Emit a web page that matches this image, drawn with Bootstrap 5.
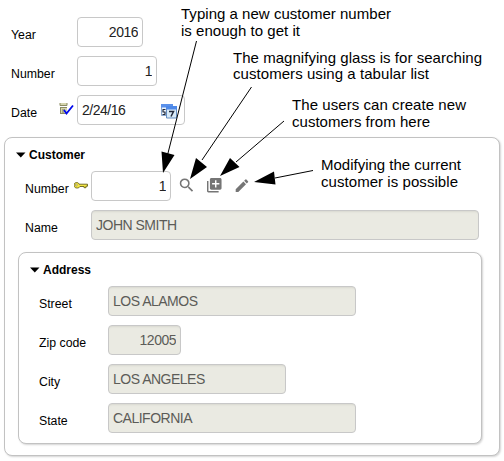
<!DOCTYPE html>
<html lang="en">
<head>
<meta charset="utf-8">
<meta name="viewport" content="width=device-width, initial-scale=1">
<title>Invoice customer</title>
<link href="https://cdn.jsdelivr.net/npm/bootstrap@5.3.0/dist/css/bootstrap.min.css" rel="stylesheet">
<style>
body { font-family: "Liberation Sans", Arial, sans-serif; color: #000; font-size: 12px; line-height: 16px; overflow: hidden; }
.sheet { width: 504px; height: 461px; padding: 17px 3px 0 4px; }
.fields { gap: 9px; }
.line { height: 30px; }
.line > label { padding-top: 6px; font-size: 12.3px; }
.top-fields { padding-left: 7px; }
.top-fields label { width: 48px; }
.top-fields .slot { width: 18px; }
.cust label { width: 49px; }
.cust .slot { width: 17px; }
.addr label { width: 69px; }
.line .form-control { height: 30px; min-height: 0; padding: 0 4px; font-size: 14px; letter-spacing: -.5px; line-height: 26px; color: #222; border-color: #c8c8c8; border-radius: 4px; box-shadow: none; }
.line .form-control:disabled { color: #5c5c58; background: #eaeae2; opacity: 1; box-shadow: inset 0 2px 2px -1px #d8d8d0; }
.w-66 { width: 66px; } .w-73 { width: 73px; } .w-80 { width: 80px; } .w-108 { width: 108px; }
.w-178 { width: 178px; } .w-248 { width: 248px; } .w-388 { width: 388px; }
.frame { border: 1px solid #c2c2c2; border-radius: 8px; box-shadow: 1px 1px 2px #d4d4d4; --bs-card-border-radius: 8px; }
.frame-outer { width: 496px; height: 319px; margin-top: 12px; }
.frame-inner { width: 464px; height: 192px; margin: 12px 0 0 13px; }
.frame h2 { font-size: 12px; line-height: 16px; padding: 9px 0 8px 11px; gap: 3px; }
.cust { padding-left: 20px; }
.addr { padding-left: 20px; }
.date-box { width: 108px; }
.date-box svg { right: 7px; top: 9px; }
.tools { padding-left: 8px; gap: 12px; }
.notes { font: 15px "Liberation Sans", Arial, sans-serif; }
</style>
<script src="https://cdn.jsdelivr.net/npm/bootstrap@5.3.0/dist/js/bootstrap.bundle.min.js"></script>
</head>
<body class="bg-white">
<main class="sheet position-relative">
  <div class="fields top-fields d-flex flex-column">
    <div class="line d-flex align-items-center"><label for="year">Year</label><span class="slot"></span><input id="year" class="form-control w-66 text-end" value="2016"></div>
    <div class="line d-flex align-items-center"><label for="num">Number</label><span class="slot"></span><input id="num" class="form-control w-80 text-end" value="1"></div>
    <div class="line d-flex align-items-center"><label for="date">Date</label>
      <span class="slot d-flex">
        <svg width="15" height="16" viewBox="0 1 15 16"><path d="M1 2h7v3H1zM1 6h7v7H1z" fill="#d5d5ae"/><path d="M1 2v2.500h7V2M1 6.500h7M1 12.500h6M1.500 6v7" fill="none" stroke="#8b8b62"/><path d="M3 9h3M3 11h2" stroke="#77775a"/><path d="M5 9L7.500 12.500l6.500-8" fill="none" stroke="#0009ed" stroke-width="1.8"/></svg>
      </span>
      <div class="date-box position-relative"><input id="date" class="form-control" value="2/24/16">
        <svg class="position-absolute" width="17" height="15" viewBox="0 0 17 15"><path d="M.5.5h11v11H.5z" fill="#edf5fc" stroke="#87a7d0"/><path d="M0 0h12v3.500H0z" fill="#5a91eb"/><path d="M1.500 5.500h3M1.500 8h3M1.500 10.500h3M2 6v2M4 8v2" fill="none" stroke="#20283a" stroke-width="1.200"/><path d="M5.500 2.500h10v11.500h-10z" fill="#d8eaf8" stroke="#658ec2"/><path d="M5 2h11v3.500H5z" fill="#4e89e8"/><path d="M8 7.500h4.500L10 12.500" fill="none" stroke="#20283a" stroke-width="1.500"/></svg>
      </div>
    </div>
  </div>

  <section class="card frame frame-outer">
    <h2 class="fw-bold m-0 d-flex align-items-center"><svg width="10" height="6" viewBox="0 0 10 6"><path d="M0 .5h9.500L4.800 5.500z"/></svg>Customer</h2>
    <div class="fields cust d-flex flex-column">
      <div class="line d-flex align-items-center"><label for="cnum">Number</label>
        <span class="slot d-flex"><svg width="16" height="12" viewBox="1 0 16 12"><path d="M6 4.200h8.500v2H13v1.500h-2V6.500H7C5.700 8.800 1 8.600 1 5.200S5.500 1.800 6 4.200z" fill="#f3e642" stroke="#66611d" stroke-width=".9"/><circle cx="3.200" cy="5" r="1" fill="#fff" stroke="#777023" stroke-width=".6"/></svg></span>
        <input id="cnum" class="form-control w-80 text-end" value="1">
        <div class="tools d-flex align-items-center">
          <svg width="16" height="16" viewBox="2 2.500 21 21" fill="#757575"><path d="M15.500 14h-.79l-.28-.27A6.470 6.470 0 0 0 16 9.500 6.500 6.500 0 1 0 9.500 16c1.610 0 3.090-.59 4.230-1.570l.27.28v.79l5 4.990L20.490 19l-4.990-5zm-6 0C7.010 14 5 11.990 5 9.500S7.010 5 9.500 5 14 7.010 14 9.500 11.990 14 9.500 14z"/></svg>
          <svg width="16" height="16" viewBox="2 2 22 22" fill="#757575"><path d="M4 6H2v14c0 1.100.9 2 2 2h14v-2H4V6zm16-4H8c-1.100 0-2 .9-2 2v12c0 1.100.9 2 2 2h12c1.100 0 2-.9 2-2V4c0-1.100-.9-2-2-2zm-1 9h-4v4h-2v-4H9V9h4V5h2v4h4v2z"/></svg>
          <svg width="16" height="16" viewBox="2 1 23 23" fill="#757575"><path d="M3 17.250V21h3.750L17.810 9.940l-3.750-3.750L3 17.250zM20.710 7.040a1 1 0 0 0 0-1.410l-2.340-2.340a1 1 0 0 0-1.410 0l-1.830 1.830 3.750 3.750 1.830-1.830z"/></svg>
        </div>
      </div>
      <div class="line d-flex align-items-center"><label for="name">Name</label><span class="slot"></span><input id="name" class="form-control w-388" value="JOHN SMITH" disabled></div>
    </div>

    <section class="card frame frame-inner">
      <h2 class="fw-bold m-0 d-flex align-items-center"><svg width="10" height="6" viewBox="0 0 10 6"><path d="M0 .5h9.500L4.800 5.500z"/></svg>Address</h2>
      <div class="fields addr d-flex flex-column">
        <div class="line d-flex align-items-center"><label for="street">Street</label><input id="street" class="form-control w-248" value="LOS ALAMOS" disabled></div>
        <div class="line d-flex align-items-center"><label for="zip">Zip code</label><input id="zip" class="form-control w-73 text-end" value="12005" disabled></div>
        <div class="line d-flex align-items-center"><label for="city">City</label><input id="city" class="form-control w-178" value="LOS ANGELES" disabled></div>
        <div class="line d-flex align-items-center"><label for="state">State</label><input id="state" class="form-control w-248" value="CALIFORNIA" disabled></div>
      </div>
    </section>
  </section>

  <svg class="notes position-absolute top-0 start-0 pe-none" width="504" height="461" viewBox="0 0 504 461">
    <path d="M196.500 41L167 157M251.500 87L202 160M284 121L236 162M313 170.500L275 178" fill="none" stroke="#000"/>
    <path d="M163 173L161.500 151.500L174.500 155zM190 179L196 158L207 167zM220 176L230 158L239.500 167zM254 182L274 171.500L275.500 184.500z"/>
    <text x="181" y="19" textLength="210">Typing a new customer number</text>
    <text x="181" y="36" textLength="119">is enough to get it</text>
    <text x="233" y="63" textLength="249">The magnifying glass is for searching</text>
    <text x="233" y="79" textLength="196">customers using a tabular list</text>
    <text x="292" y="110" textLength="174">The users can create new</text>
    <text x="292" y="127" textLength="138">customers from here</text>
    <text x="321" y="170" textLength="140">Modifying the current</text>
    <text x="321" y="187" textLength="137">customer is possible</text>
  </svg>
</main>
</body>
</html>
